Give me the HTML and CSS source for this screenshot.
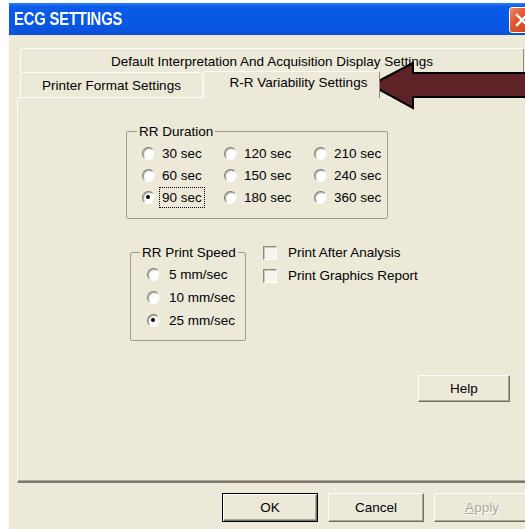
FILE: index.html
```html
<!DOCTYPE html>
<html lang="en">
<head>
<meta charset="utf-8">
<title>ECG Settings</title>
<link rel="stylesheet" href="styles.css">
</head>
<body>
<div class="window">
  <header class="titlebar">
    <span class="title">ECG SETTINGS</span>
    <span class="close" aria-label="Close">
      <svg width="14" height="14" viewBox="0 0 14 14"><path d="M2 2 L12 12 M12 2 L2 12" stroke="#fff" stroke-width="2.4" stroke-linecap="square"/></svg>
    </span>
  </header>

  <div class="client">
    <div class="tab-row">
      <div class="tab tab-wide">Default Interpretation And Acquisition Display Settings</div>
    </div>
    <div class="tab-row tab-row-front">
      <div class="tab tab-printer">Printer Format Settings</div>
      <div class="tab tab-active">R-R Variability Settings</div>
    </div>

    <div class="panel">
      <div class="group group-duration">
        <div class="group-title">RR Duration</div>
        <div class="radio-grid">
          <label class="option"><span class="radio"></span>30 sec</label>
          <label class="option"><span class="radio"></span>120 sec</label>
          <label class="option"><span class="radio"></span>210 sec</label>
          <label class="option"><span class="radio"></span>60 sec</label>
          <label class="option"><span class="radio"></span>150 sec</label>
          <label class="option"><span class="radio"></span>240 sec</label>
          <label class="option"><span class="radio checked"></span><span class="focus">90 sec</span></label>
          <label class="option"><span class="radio"></span>180 sec</label>
          <label class="option"><span class="radio"></span>360 sec</label>
        </div>
      </div>

      <div class="print-row">
        <div class="group group-speed">
          <div class="group-title">RR Print Speed</div>
          <div class="speed-list">
            <label class="option"><span class="radio"></span>5 mm/sec</label>
            <label class="option"><span class="radio"></span>10 mm/sec</label>
            <label class="option"><span class="radio checked"></span>25 mm/sec</label>
          </div>
        </div>
        <div class="checks">
          <label class="check-option"><span class="checkbox"></span>Print After Analysis</label>
          <label class="check-option"><span class="checkbox"></span>Print Graphics Report</label>
        </div>
      </div>

      <button class="btn btn-help" type="button">Help</button>
    </div>

    <div class="footer">
      <button class="btn btn-dialog btn-default" type="button">OK</button>
      <button class="btn btn-dialog" type="button">Cancel</button>
      <button class="btn btn-dialog btn-disabled" type="button" disabled><u>A</u>pply</button>
    </div>
  </div>
</div>

<svg class="pointer" width="525" height="120" viewBox="0 0 525 120">
  <polygon points="371,85 413,63 413,73 530,73 530,97 413,97 413,108" fill="#5e2326" stroke="#000" stroke-width="2" stroke-linejoin="miter"/>
</svg>
</body>
</html>
```

FILE: styles.css
```css
html, body {
  margin: 0;
  padding: 0;
}

body {
  position: relative;
  width: 525px;
  height: 529px;
  overflow: hidden;
  background: #ffffff;
  font-family: "Liberation Sans", Arial, sans-serif;
  font-size: 13.5px;
  color: #000;
}

.window {
  margin: 3px 0 0 9px;
  height: 526px;
  background: #ece9d8;
  display: flex;
  flex-direction: column;
  overflow: hidden;
}

/* caption bar */
.titlebar {
  height: 32px;
  flex: none;
  display: flex;
  align-items: center;
  justify-content: space-between;
  padding-left: 5px;
  background: linear-gradient(#2f7cf4 0%, #0a5ce8 12%, #0658e6 55%, #0a52da 100%);
}

.title {
  display: inline-block;
  color: #fff;
  font-family: "Liberation Sans", Arial, sans-serif;
  font-weight: bold;
  font-size: 18px;
  letter-spacing: -0.3px;
  transform: scaleX(0.83);
  transform-origin: left center;
}

.close {
  width: 26px;
  height: 26px;
  margin-right: -10px;
  margin-top: 2px;
  box-sizing: border-box;
  border: 1px solid #fff;
  border-radius: 3px;
  background: linear-gradient(135deg, #ee8a66 0%, #e0552f 40%, #c8401d 100%);
  display: flex;
  align-items: center;
  justify-content: center;
}

/* tabs */
.client {
  padding: 13px 0 0 8px;
  display: flex;
  flex-direction: column;
}

.tab-row {
  display: flex;
  align-items: flex-start;
  height: 24px;
}

.tab-row-front {
  height: 25px;
}

.tab {
  box-sizing: border-box;
  background: #ece9d8;
  border: 1px solid;
  border-color: #fdfdfb #8d8b7e transparent #fdfdfb;
  border-bottom: none;
  border-radius: 2px 2px 0 0;
  text-align: center;
  line-height: 15px;
  white-space: nowrap;
}

.tab-wide {
  margin-left: 3px;
  width: 504px;
  height: 24px;
  padding-top: 5px;
}

.tab-printer {
  margin-left: 3px;
  width: 183px;
  height: 25px;
  padding-top: 5px;
  border-right-color: #f4f3ee;
}

.tab-active {
  position: relative;
  z-index: 1;
  width: 177px;
  height: 27px;
  margin-top: -1px;
  padding: 3px 0 0 14px;
}

/* property page */
.panel {
  box-sizing: border-box;
  width: 520px;
  height: 386px;
  border-top: 1px solid #fdfdfb;
  border-left: 1px solid #fdfdfb;
  border-bottom: 2px solid #7b796d;
  box-shadow: inset 0 -1px 0 #aca899;
  display: flex;
  flex-direction: column;
  align-items: flex-start;
}

.group {
  box-sizing: border-box;
  border: 1px solid #9f9d92;
  border-radius: 2px;
}

.group-title {
  width: fit-content;
  margin: -8px 0 0 10px;
  padding: 0 2px;
  line-height: 15px;
  background: #ece9d8;
}

.group-duration {
  margin: 33px 0 0 108px;
  width: 262px;
  height: 88px;
}

.radio-grid {
  margin-top: 3px;
  padding-left: 15px;
  display: grid;
  grid-template-columns: 82px 90px auto;
  grid-auto-rows: 22px;
}

.option {
  display: flex;
  align-items: center;
  gap: 7px;
  white-space: nowrap;
}

.radio {
  position: relative;
  flex: none;
  box-sizing: border-box;
  width: 13px;
  height: 13px;
  border-radius: 50%;
  border: 1px solid;
  border-color: #7d7b72 #f2f1ec #ffffff #7d7b72;
  background: radial-gradient(circle at 62% 62%, #ffffff 0%, #ffffff 45%, #e6e4dc 100%);
  box-shadow: inset 1px 1px 0 #b3b1a6;
}

.radio.checked::after {
  content: "";
  position: absolute;
  left: 3px;
  top: 3px;
  width: 4px;
  height: 4px;
  border-radius: 50%;
  background: #000;
}

.focus {
  outline: 1px dotted #000;
  outline-offset: 1px;
  padding: 0 1px;
  margin-left: -1px;
  line-height: 17px;
}

.print-row {
  display: flex;
  align-items: flex-start;
}

.group-speed {
  margin: 33px 0 0 112px;
  width: 116px;
  height: 89px;
}

.group-speed .group-title {
  margin-left: 9px;
}

.speed-list {
  margin-top: 3px;
  padding-left: 16px;
  display: grid;
  grid-auto-rows: 23px;
}

.speed-list .option {
  gap: 9px;
}

.checks {
  margin: 22px 0 0 17px;
  display: grid;
  grid-auto-rows: 23px;
}

.check-option {
  display: flex;
  align-items: center;
  gap: 11px;
  white-space: nowrap;
}

.checkbox {
  flex: none;
  box-sizing: border-box;
  width: 14px;
  height: 14px;
  border: 1px solid;
  border-color: #8a887d #ffffff #ffffff #8a887d;
  background: #f6f5f0;
  box-shadow: inset 1px 1px 0 #c9c7bc;
}

/* push buttons */
.btn {
  box-sizing: border-box;
  font-family: "Liberation Sans", Arial, sans-serif;
  font-size: 13.5px;
  color: #000;
  background: #ece9d8;
  border: 1px solid;
  border-color: #ffffff #716f64 #716f64 #ffffff;
  box-shadow: inset -1px -1px 0 #aca899;
  padding: 0;
}

.btn-help {
  margin: 34px 0 0 400px;
  width: 92px;
  height: 27px;
}

.footer {
  margin: 10px 0 0 205px;
  display: flex;
  gap: 10px;
}

.btn-dialog {
  width: 96px;
  height: 29px;
  flex: none;
}

.btn-default {
  border: 1px solid #000;
  box-shadow: inset 1px 1px 0 #ffffff, inset -1px -1px 0 #716f64, inset -2px -2px 0 #aca899;
}

.btn-disabled {
  color: #aca899;
  text-shadow: 1px 1px 0 #ffffff;
}

.btn-disabled u {
  text-decoration-thickness: 1px;
}

/* callout arrow drawn over the tab strip */
.pointer {
  position: absolute;
  left: 0;
  top: 0;
  pointer-events: none;
}
```
